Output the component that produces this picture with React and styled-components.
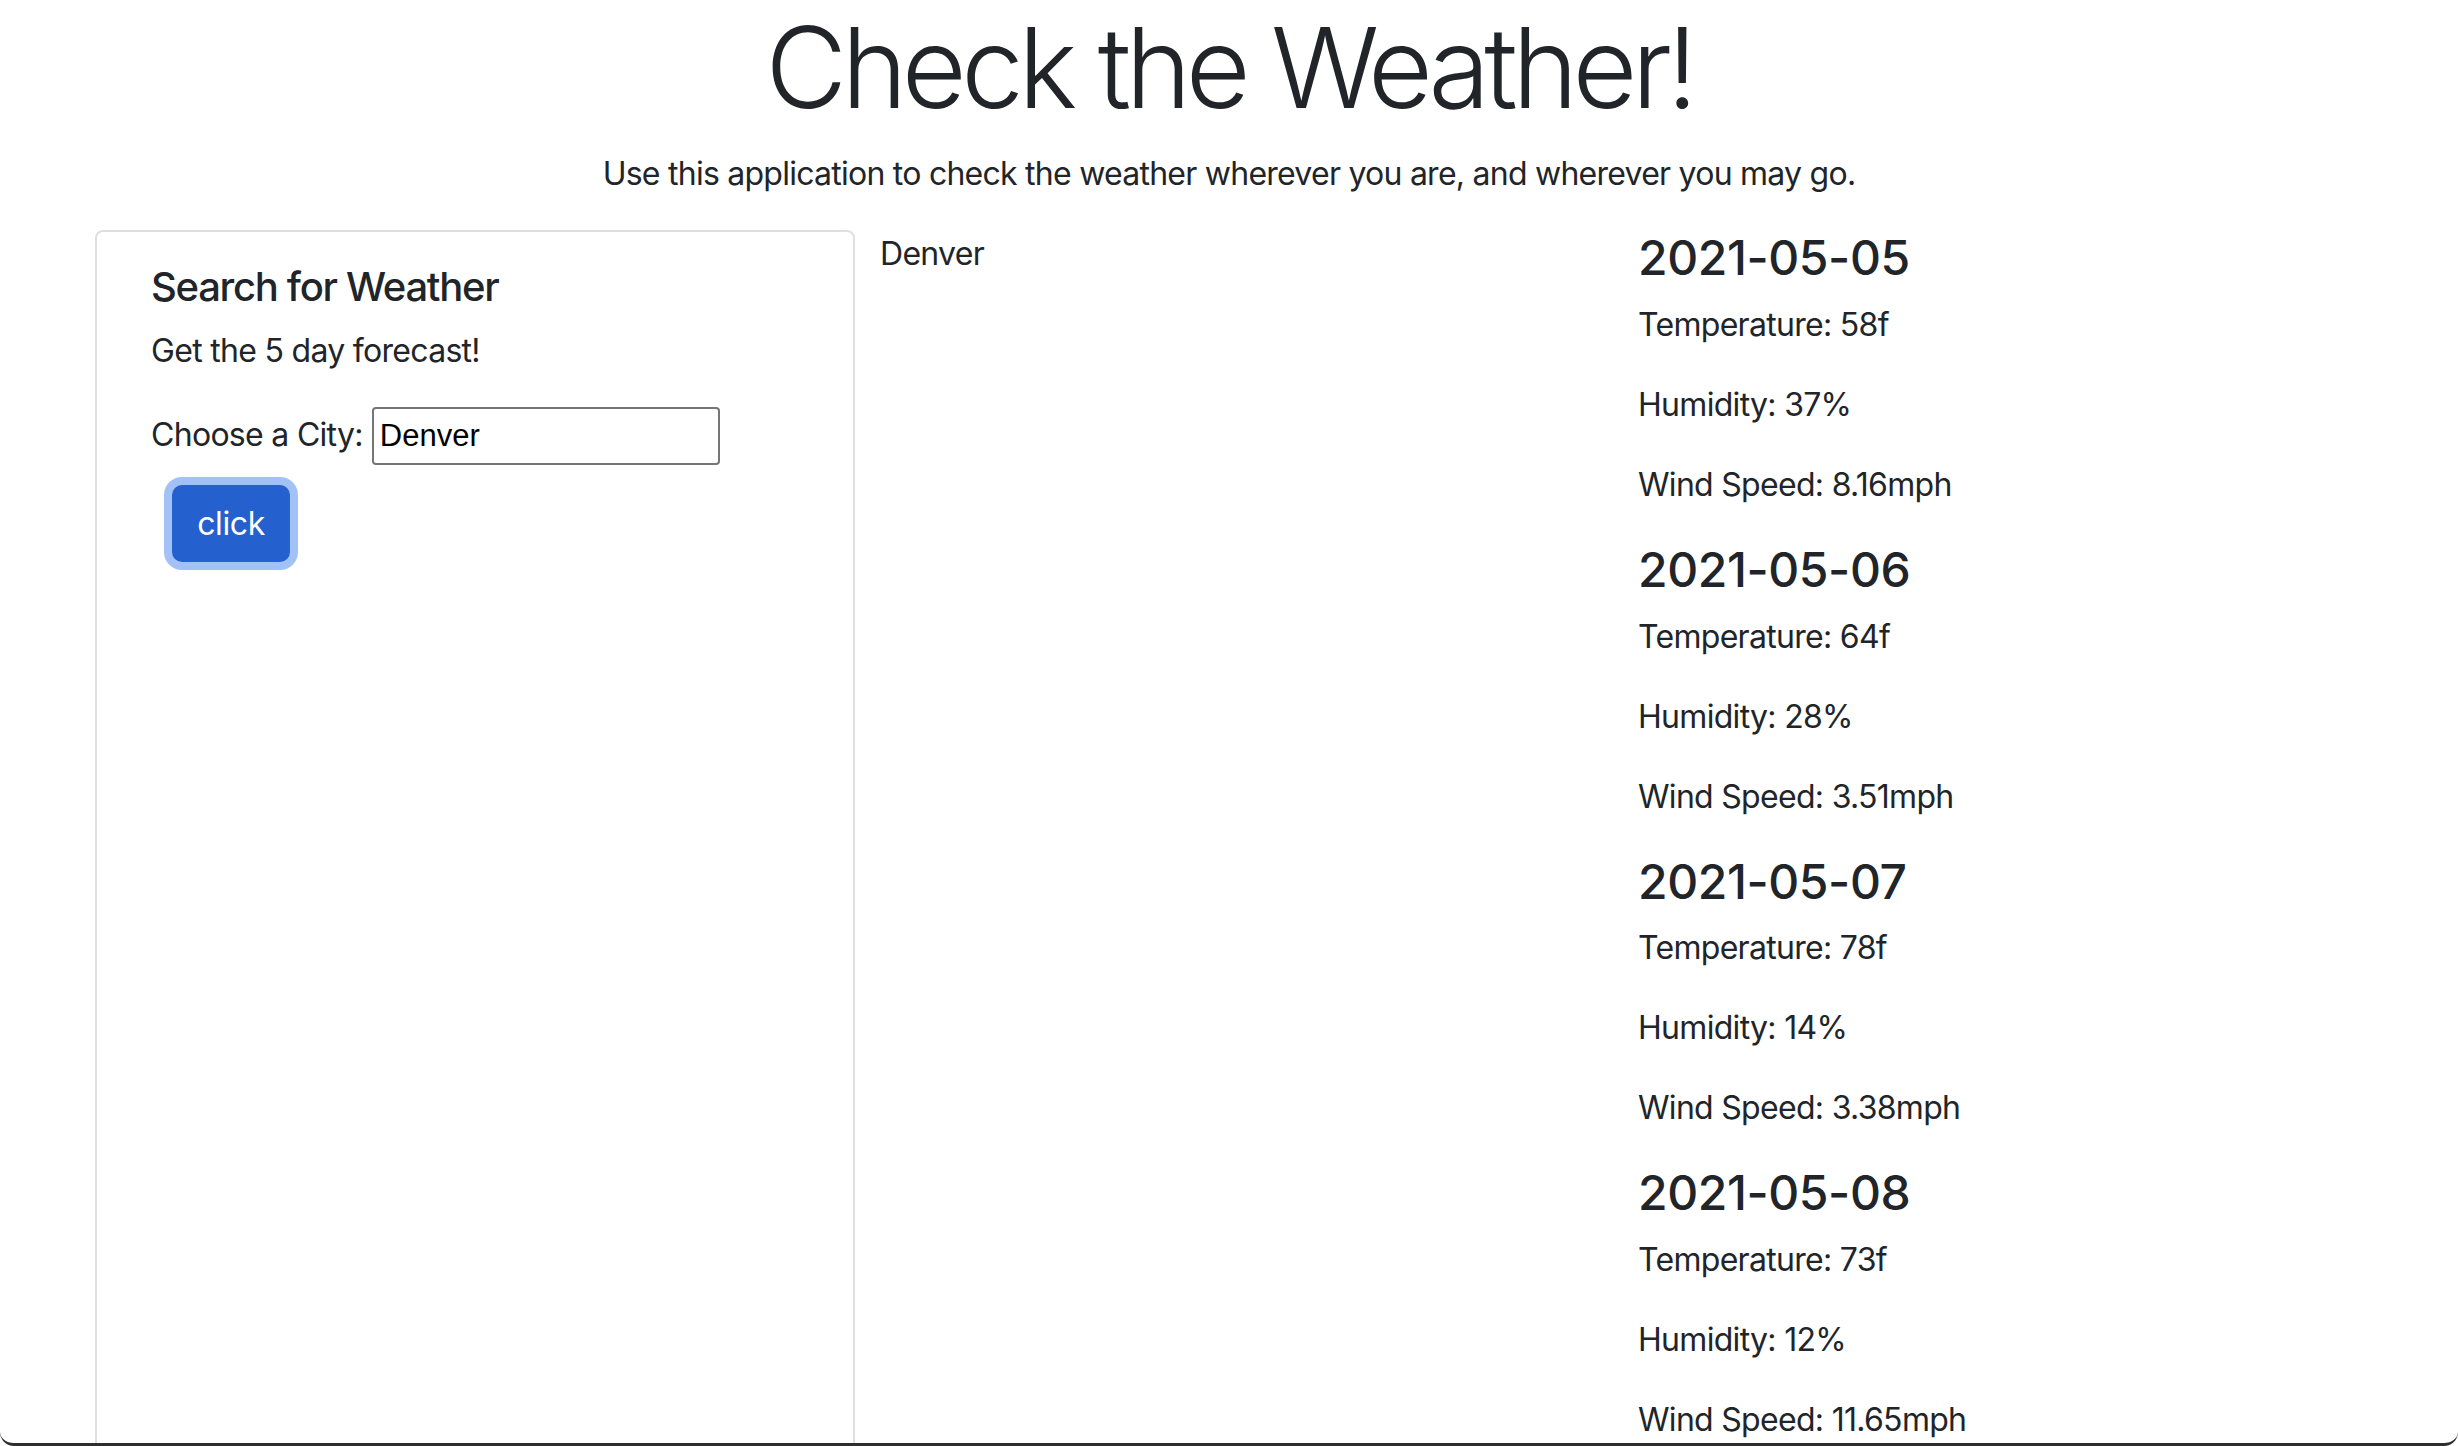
import React from "react"
import styled, { createGlobalStyle } from "styled-components"

const GlobalStyle = createGlobalStyle`
  html, body {
    margin: 0;
    padding: 0;
    background: #fff;
  }
  body {
    font-family: Inter, "Noto Sans", sans-serif;
    font-size: 32px;
    line-height: 1.5;
    letter-spacing: -0.7px;
    color: #212529;
  }
  * {
    box-sizing: border-box;
  }
`

const Page = styled.div`
  height: 100vh;
  overflow: hidden;
`

const Header = styled.header`
  text-align: center;
`

const Title = styled.h1`
  margin: 0 0 16px;
  font-size: 112px;
  font-weight: 300;
  line-height: 1.2;
  letter-spacing: -5.6px;
`

const Lead = styled.p`
  margin: 0 0 32px;
  letter-spacing: -0.75px;
`

const Row = styled.div`
  display: grid;
  grid-template-columns: 760px 733px 1fr;
  column-gap: 25px;
  padding-left: 95px;
  align-items: start;
`

const Card = styled.section`
  min-height: 1400px;
  border: 2px solid rgba(0, 0, 0, 0.125);
  border-radius: 8px;
  padding: 31px 54px;
`

const CardTitle = styled.h5`
  margin: 0 0 16px;
  font-size: 40px;
  font-weight: 500;
  line-height: 1.2;
  letter-spacing: -1.3px;
`

const Text = styled.p`
  margin: 0 0 32px;
`

const Field = styled.label`
  display: flex;
  align-items: baseline;
  gap: 9px;
`

const Input = styled.input`
  width: 348px;
  height: 58px;
  padding: 0 6px;
  border: 2px solid #767676;
  border-radius: 4px;
  font-family: "Liberation Sans", Arial, sans-serif;
  font-size: 31px;
  letter-spacing: 0;
  color: #000;
  outline: none;
`

const Button = styled.button`
  display: block;
  margin: 20px 0 0 21px;
  width: 118px;
  height: 77px;
  padding: 0;
  border: 2px solid #2461cf;
  border-radius: 10px;
  background: #2461cf;
  color: #fff;
  font-family: inherit;
  font-size: 32px;
  letter-spacing: -0.4px;
  box-shadow: 0 0 0 8px #a2c1f7;
`

const City = styled.p`
  margin: 0;
`

const Forecast = styled.div`
  margin-top: -1px;
`

const Day = styled.div``

const DayTitle = styled.h4`
  margin: 0 0 14px;
  font-size: 48px;
  font-weight: 500;
  line-height: 1.2;
  letter-spacing: -0.4px;
`

const Frame = styled.div`
  position: fixed;
  left: 0;
  right: 0;
  bottom: 0;
  height: 30px;
  border-bottom: 3px solid #2e2e2e;
  border-radius: 0 0 14px 14px;
  pointer-events: none;
`

const days = [
  { date: "2021-05-05", temp: "58f", humidity: "37%", wind: "8.16mph" },
  { date: "2021-05-06", temp: "64f", humidity: "28%", wind: "3.51mph" },
  { date: "2021-05-07", temp: "78f", humidity: "14%", wind: "3.38mph" },
  { date: "2021-05-08", temp: "73f", humidity: "12%", wind: "11.65mph" },
]

export default function App() {
  return (
    <>
      <GlobalStyle />
      <Page>
        <Header>
          <Title>Check the Weather!</Title>
          <Lead>Use this application to check the weather wherever you are, and wherever you may go.</Lead>
        </Header>
        <Row>
          <Card>
            <CardTitle>Search for Weather</CardTitle>
            <Text>Get the 5 day forecast!</Text>
            <Field>
              Choose a City:
              <Input defaultValue="Denver" />
            </Field>
            <Button>click</Button>
          </Card>
          <City>Denver</City>
          <Forecast>
            {days.map(d => (
              <Day key={d.date}>
                <DayTitle>{d.date}</DayTitle>
                <Text>Temperature: {d.temp}</Text>
                <Text>Humidity: {d.humidity}</Text>
                <Text>Wind Speed: {d.wind}</Text>
              </Day>
            ))}
          </Forecast>
        </Row>
        <Frame />
      </Page>
    </>
  )
}
